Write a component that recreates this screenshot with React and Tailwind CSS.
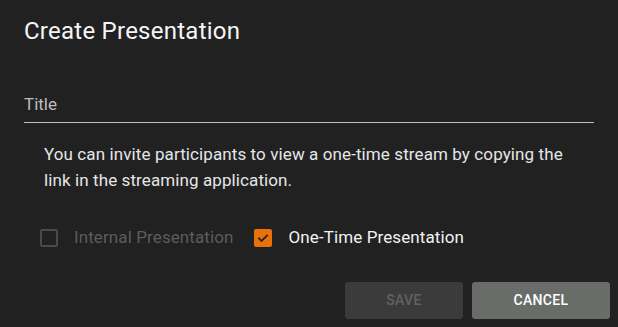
import React from 'react';

const Checkbox = ({ checked, disabled }) => (
  <span
    className={
      checked
        ? 'flex h-[18px] w-[18px] items-center justify-center rounded-[2px] bg-[#e8710a]'
        : 'h-[18px] w-[18px] rounded-[2px] border-2 ' + (disabled ? 'border-[#4a4a4a]' : 'border-[#9e9e9e]')
    }
  >
    {checked && (
      <svg width="14" height="14" viewBox="0 0 24 24" fill="none">
        <path d="M5 12.5l4.5 4.5L19 7.5" stroke="#222" strokeWidth="3" strokeLinecap="square" />
      </svg>
    )}
  </span>
);

const App = () => {
  return (
    <div className="h-[327px] w-[618px] bg-[#212121] font-['Roboto',sans-serif] text-white">
      <div className="px-6 pt-[15px]">
        <h1 className="text-[24px] leading-[32px] tracking-[0.25px] text-[#f5f5f5]">Create Presentation</h1>
        <div className="mt-[46px] border-b border-[#bdbdbd] pb-[7px] text-[17px] leading-[22px] text-[#bdbdbd]">Title</div>
      </div>
      <p className="mt-[18px] pl-11 pr-12 text-[17px] leading-[26px] tracking-[0.1px] text-[#e6e6e6]">
        You can invite participants to view a one-time stream by copying the link in the streaming application.
      </p>
      <div className="mt-[32px] flex items-center pl-10">
        <Checkbox disabled />
        <span className="ml-4 text-[17px] tracking-[0.1px] text-[#5c5c5c]">Internal Presentation</span>
        <span className="ml-5">
          <Checkbox checked />
        </span>
        <span className="ml-[17px] text-[17px] tracking-[0.1px] text-[#f2f2f2]">One-Time Presentation</span>
      </div>
      <div className="mt-[31px] flex justify-end gap-[9px] pr-[8px]">
        <button className="h-[37px] w-[118px] rounded-[3px] bg-[#3b3b3b] text-[14px] font-medium tracking-wide text-[#626262]">
          SAVE
        </button>
        <button className="h-[37px] w-[138px] rounded-[3px] bg-[#6a6c6a] text-[14px] font-medium tracking-wide text-white">
          CANCEL
        </button>
      </div>
    </div>
  );
};

export default App;
